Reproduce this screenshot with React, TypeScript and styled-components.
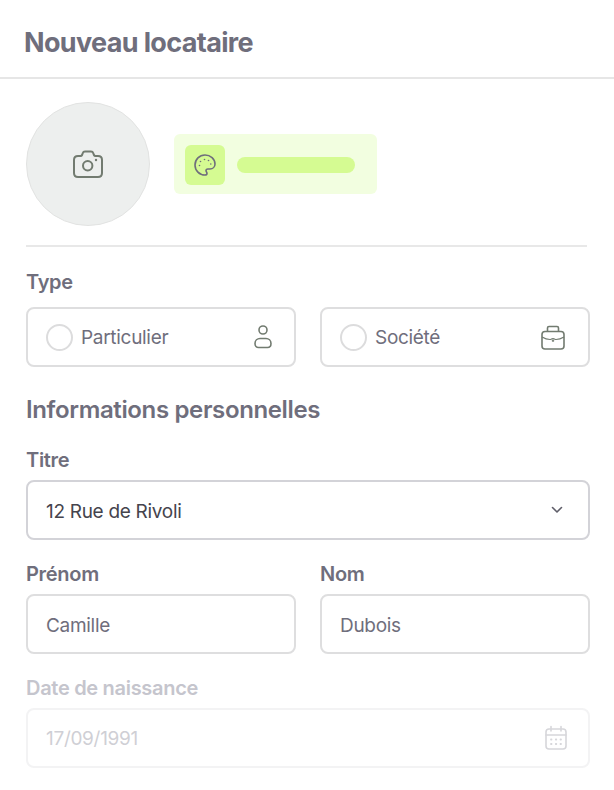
import React, { ReactElement, ReactNode } from "react";
import styled, { createGlobalStyle } from "styled-components";

const GlobalStyle = createGlobalStyle`
  html, body {
    margin: 0;
    padding: 0;
    background: #fff;
    overflow: hidden;
  }
  * {
    box-sizing: border-box;
  }
  body {
    font-family: Inter, "Liberation Sans", sans-serif;
    color: #6f6e7c;
  }
`;

const Page = styled.div`
  width: 614px;
  height: 790px;
  overflow: hidden;
`;

const Header = styled.header`
  height: 79px;
  padding: 28px 24px 0;
  border-bottom: 2px solid #e6e6e6;
`;

const Title = styled.h1`
  margin: 0;
  font-size: 27px;
  line-height: 30px;
  font-weight: 700;
  letter-spacing: -0.65px;
  color: #6f6e7c;
`;

const Form = styled.div`
  padding: 23px 24px 0 26px;
`;

const Identity = styled.div`
  display: flex;
  align-items: center;
  gap: 24px;
  padding-bottom: 19px;
  border-bottom: 2px solid #e8e8e8;
  margin-right: 3px;
`;

const Avatar = styled.div`
  width: 124px;
  height: 124px;
  border-radius: 50%;
  background: #edefee;
  border: 1px solid #e2e3e2;
  display: flex;
  align-items: center;
  justify-content: center;
  color: #727b70;
`;

const ColorChip = styled.div`
  width: 203px;
  height: 60px;
  border-radius: 6px;
  background: #f2fee0;
  padding: 2px 11px 0;
  display: flex;
  align-items: center;
  gap: 12px;
`;

const ChipIcon = styled.div`
  width: 40px;
  height: 40px;
  border-radius: 6px;
  background: #d5fb92;
  display: flex;
  align-items: center;
  justify-content: center;
  color: #6f6e7c;
`;

const ChipBar = styled.div`
  width: 118px;
  height: 16px;
  border-radius: 8px;
  background: #d5fb92;
`;

const Label = styled.div<{ $disabled?: boolean; $gap?: number }>`
  font-size: 20px;
  line-height: 22px;
  font-weight: 600;
  letter-spacing: -0.3px;
  margin-bottom: ${(p) => p.$gap ?? 9}px;
  color: ${(p) => (p.$disabled ? "#c5c5cd" : "#6f6e7c")};
`;

const Section = styled.section<{ $top: number }>`
  margin-top: ${(p) => p.$top}px;
`;

const SectionTitle = styled.h2`
  margin: 29px 0 0;
  font-size: 24px;
  line-height: 28px;
  font-weight: 600;
  letter-spacing: -0.36px;
  color: #6f6e7c;
`;

const TwoColumns = styled.div`
  display: grid;
  grid-template-columns: 270px 270px;
  column-gap: 24px;
`;

const Field = styled.div<{ $disabled?: boolean }>`
  height: 60px;
  border-radius: 8px;
  border: 2px solid ${(p) => (p.$disabled ? "#f3f3f4" : "#dededf")};
  background: #fff;
  padding: 0 18px;
  display: flex;
  align-items: center;
  justify-content: space-between;
`;

const SelectField = styled(Field)`
  border-color: #d3d3d8;
  padding-right: 24px;
`;

const Value = styled.span<{ $tone?: "dark" | "faint"; $drop?: boolean }>`
  font-size: 19px;
  letter-spacing: -0.3px;
  padding-top: ${(p) => (p.$drop ? 2 : 0)}px;
  color: ${(p) =>
    p.$tone === "dark" ? "#45444d" : p.$tone === "faint" ? "#cfcfd5" : "#6f6e7c"};
`;

const OptionLeft = styled.div`
  display: flex;
  align-items: center;
  gap: 8px;
`;

const Radio = styled.span`
  width: 27px;
  height: 27px;
  border-radius: 50%;
  border: 2px solid #dcdcdd;
  background: #fff;
`;

const IconSlot = styled.span<{ $right: number }>`
  display: flex;
  color: #727b70;
  margin-right: ${(p) => p.$right}px;
`;

const CameraIcon = () => (
  <svg width="32" height="30" viewBox="0 0 32 30" fill="none" stroke="currentColor" strokeWidth="2" strokeLinejoin="round">
    <path d="M2 11c0-2.500 1.500-4 4-4h2.500c.8 0 1.300-.4 1.600-1l.6-1.800C11 3.300 11.800 2.500 13 2.500h6c1.200 0 2 .8 2.300 1.700l.6 1.800c.3.6.8 1 1.600 1H26c2.500 0 4 1.500 4 4v13c0 2.500-1.500 4-4 4H6c-2.500 0-4-1.500-4-4z" />
    <circle cx="15.700" cy="16.700" r="4.700" />
    <circle cx="24" cy="11" r="1.200" fill="currentColor" stroke="none" />
  </svg>
);

const PaletteIcon = () => (
  <svg width="24" height="24" viewBox="0 0 24 24" fill="none" stroke="currentColor" strokeWidth="1.600" strokeLinejoin="round">
    <path d="M12 2a10 10 0 1 0 0 20c1.300 0 2-.9 2-1.800 0-.5-.2-.9-.5-1.300-.3-.4-.5-.8-.5-1.200 0-1 .8-1.700 1.800-1.700H17c2.800 0 5-2.200 5-5C22 6 17.500 2 12 2z" />
    <circle cx="6.500" cy="12.500" r=".8" fill="currentColor" stroke="none" />
    <circle cx="7.500" cy="8.500" r=".8" fill="currentColor" stroke="none" />
    <circle cx="11.500" cy="6.500" r=".8" fill="currentColor" stroke="none" />
    <circle cx="15.500" cy="7.500" r=".8" fill="currentColor" stroke="none" />
    <circle cx="17.800" cy="11" r=".8" fill="currentColor" stroke="none" />
  </svg>
);

const PersonIcon = () => (
  <svg width="20" height="26" viewBox="0 0 20 26" fill="none" stroke="currentColor" strokeWidth="1.600">
    <circle cx="10" cy="6" r="4" />
    <path d="M2 19.500c0-3 2.400-5 5-5h6c2.600 0 5 2 5 5 0 2.500-1.500 4-3.500 4h-9C3.500 23.500 2 22 2 19.500z" />
  </svg>
);

const BriefcaseIcon = () => (
  <svg width="26" height="27" viewBox="0 0 26 27" fill="none" stroke="currentColor" strokeWidth="1.600" strokeLinejoin="round">
    <rect x="2" y="7.500" width="22" height="17.500" rx="3" />
    <path d="M7.500 7.500V4c0-1 .6-1.500 1.500-1.500h8c.9 0 1.500.5 1.500 1.500v3.500" />
    <path d="M2 13c3 1.800 6 2.500 8 2.500.8 0 1.500-.8 3-.8s2.200.8 3 .8c2 0 5-.7 8-2.500" strokeWidth="1.200" />
    <path d="M13 15.500v2.500M11.800 16.800h2.400" strokeWidth="1.100" />
  </svg>
);

const ChevronIcon = () => (
  <svg width="14" height="14" viewBox="0 0 14 14" fill="none" stroke="#5f5e69" strokeWidth="1.600" strokeLinecap="round" strokeLinejoin="round">
    <path d="M2.500 4.500 7 9l4.500-4.500" />
  </svg>
);

const CalendarIcon = () => (
  <svg width="24" height="26" viewBox="0 0 24 26" fill="none" stroke="#d6d6da" strokeWidth="1.600" strokeLinecap="round">
    <rect x="2" y="4" width="20" height="20" rx="3" />
    <path d="M2 10h20M7 1.500V6M17 1.500V6" />
    <path d="M7 14.500h.5M11.800 14.500h.5M16.500 14.500h.5M7 19h.5M11.800 19h.5M16.500 19h.5" strokeWidth="1.800" />
  </svg>
);

function TypeOption({
  label,
  icon,
  iconRight,
}: {
  label: string;
  icon: ReactNode;
  iconRight: number;
}): ReactElement {
  return (
    <Field>
      <OptionLeft>
        <Radio />
        <Value>{label}</Value>
      </OptionLeft>
      <IconSlot $right={iconRight}>{icon}</IconSlot>
    </Field>
  );
}

export default function App(): ReactElement {
  return (
    <Page>
      <GlobalStyle />
      <Header>
        <Title>Nouveau locataire</Title>
      </Header>
      <Form>
        <Identity>
          <Avatar>
            <CameraIcon />
          </Avatar>
          <ColorChip>
            <ChipIcon>
              <PaletteIcon />
            </ChipIcon>
            <ChipBar />
          </ColorChip>
        </Identity>

        <Section $top={24}>
          <Label $gap={14}>Type</Label>
          <TwoColumns>
            <TypeOption label="Particulier" icon={<PersonIcon />} iconRight={3} />
            <TypeOption label="Société" icon={<BriefcaseIcon />} iconRight={4} />
          </TwoColumns>
        </Section>

        <SectionTitle>Informations personnelles</SectionTitle>

        <Section $top={25}>
          <Label>Titre</Label>
          <SelectField>
            <Value $tone="dark" $drop>
              12 Rue de Rivoli
            </Value>
            <ChevronIcon />
          </SelectField>
        </Section>

        <Section $top={23}>
          <TwoColumns>
            <div>
              <Label>Prénom</Label>
              <Field>
                <Value $drop>Camille</Value>
              </Field>
            </div>
            <div>
              <Label>Nom</Label>
              <Field>
                <Value $drop>Dubois</Value>
              </Field>
            </div>
          </TwoColumns>
        </Section>

        <Section $top={23}>
          <Label $disabled>Date de naissance</Label>
          <Field $disabled>
            <Value $tone="faint">17/09/1991</Value>
            <IconSlot $right={2}>
              <CalendarIcon />
            </IconSlot>
          </Field>
        </Section>
      </Form>
    </Page>
  );
}
